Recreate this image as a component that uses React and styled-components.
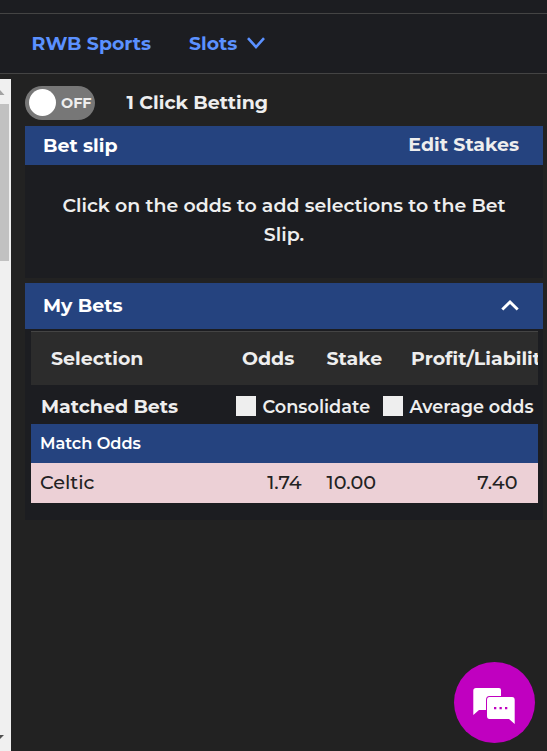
import React from "react";
import styled, { createGlobalStyle } from "styled-components";

const Global = createGlobalStyle`
  *, *::before, *::after { box-sizing: border-box; }
  html, body { margin: 0; background: #222222; overflow: hidden; }
  body { font-family: Montserrat, Inter, sans-serif; font-size: 18.95px; color: #eeeeee; }
`;

const Page = styled.div`
  display: flex;
  flex-direction: column;
  width: 547px;
  height: 751px;
  overflow: hidden;
`;

const TopStrip = styled.div`
  height: 14px;
  flex: none;
  background: #1c1d21;
  border-bottom: 1px solid #444444;
`;

const Nav = styled.nav`
  display: flex;
  align-items: center;
  height: 60px;
  flex: none;
  padding: 0 0 1px 31.5px;
  gap: 36.5px;
  background: #1c1d21;
  border-bottom: 1px solid #444444;
`;

const NavLink = styled.a`
  display: flex;
  align-items: center;
  justify-content: space-between;
  width: ${(p) => p.$width}px;
  color: #5b91ff;
  font-size: 18.9px;
  font-weight: 700;
`;

const Label = styled.span`
  white-space: nowrap;
`;

const Body = styled.div`
  display: flex;
  flex: 1;
  min-height: 0;
`;

const Scrollbar = styled.div`
  display: flex;
  flex-direction: column;
  width: 11px;
  margin-top: 5px;
  background: #f0f0f0;
`;

const ArrowBox = styled.div`
  height: 25px;
  flex: none;
  svg { display: block; }
`;

const Thumb = styled.div`
  width: 9px;
  height: 157px;
  margin-bottom: auto;
  background: #c1c1c1;
`;

const Main = styled.main`
  width: 518px;
  margin-left: 14px;
  padding-top: 12px;
`;

const ToggleRow = styled.div`
  display: flex;
  align-items: center;
  gap: 31.5px;
  height: 34px;
  margin-bottom: 6px;
  font-weight: 700;
  > span { margin-bottom: 2px; }
`;

const Toggle = styled.button`
  display: flex;
  align-items: center;
  width: 70px;
  height: 34px;
  padding: 0 0 0 4px;
  gap: 5px;
  border: 0;
  border-radius: 17px;
  background: #777777;
  color: #eeeeee;
  font: 700 14.4px Montserrat, Inter, sans-serif;
`;

const Knob = styled.span`
  width: 27px;
  height: 27px;
  flex: none;
  margin-bottom: 1px;
  border-radius: 50%;
  background: #ffffff;
`;

const PanelHeader = styled.header`
  display: flex;
  align-items: center;
  justify-content: space-between;
  height: ${(p) => p.$height}px;
  padding: 0 24px ${(p) => p.$lift || 0}px 18px;
  background: #25437f;
  color: #ffffff;
  font-weight: 700;
`;

const EditStakes = styled.a`
  color: #eeeeee;
  margin-bottom: 2px;
`;

const EmptySlip = styled.div`
  height: 113px;
  margin-bottom: 5px;
  padding: 26px 30px 0;
  background: #1c1d21;
  text-align: center;
  line-height: 29px;
  font-weight: 600;
`;

const BetsPanel = styled.section`
  height: 191px;
  padding: 2px 5px 0 6px;
  background: #1c1d21;
`;

const TableHead = styled.div`
  display: grid;
  grid-template-columns: 191px 84.500px 84.500px 1fr;
  align-items: center;
  height: 54px;
  padding-left: 20px;
  border-top: 1px solid #444444;
  background: #2c2c2c;
  overflow: hidden;
  font-weight: 700;
`;

const MatchedRow = styled.div`
  display: flex;
  align-items: center;
  height: 39px;
  padding: 4px 0 0 10px;
  font-weight: 700;
`;

const MatchedTitle = styled.div`
  width: 195px;
`;

const Option = styled.label`
  display: flex;
  align-items: center;
  gap: 6.5px;
  width: ${(p) => p.$width}px;
  flex: none;
  font-size: 17.7px;
  font-weight: 600;
`;

const Box = styled.span`
  width: 20px;
  height: 20px;
  flex: none;
  margin-bottom: 2px;
  background: #eeeeee;
`;

const MarketRow = styled.div`
  display: flex;
  align-items: center;
  height: 39px;
  padding: 0 0 2px 9px;
  background: #25437f;
  color: #ffffff;
  font-size: 16.2px;
  font-weight: 600;
`;

const BetRow = styled.div`
  display: grid;
  grid-template-columns: 187px 74.500px 74.500px 1fr;
  align-items: center;
  height: 40px;
  padding: 0 20.5px 2px 9px;
  background: #ecd0d6;
  color: #222222;
  font-size: 19.2px;
  font-weight: 500;
`;

const Cell = styled.div`
  text-align: ${(p) => (p.$right ? "right" : "left")};
`;

const ChatButton = styled.button`
  position: absolute;
  left: 454px;
  top: 662px;
  width: 81px;
  height: 81px;
  padding: 0;
  border: 0;
  border-radius: 50%;
  background: #c000c0;
  svg { display: block; }
`;

function Chevron({ up, width, height, stroke }) {
  return (
    <svg width={width} height={height} viewBox={`0 0 ${width} ${height}`} fill="none">
      <path
        d={
          up
            ? `M1.3 ${height - 1.5} L${width / 2} 2 L${width - 1.3} ${height - 1.5}`
            : `M1 1.2 L${width / 2} ${height - 2} L${width - 1} 1.2`
        }
        stroke={stroke}
        strokeWidth={up ? 2.9 : 2.6}
      />
    </svg>
  );
}

export default function App() {
  return (
    <Page>
      <Global />
      <TopStrip />
      <Nav>
        <NavLink $width={121}><Label>RWB Sports</Label></NavLink>
        <NavLink $width={76}>
          <Label>Slots</Label>
          <Chevron width={18} height={12} stroke="#5b91ff" />
        </NavLink>
      </Nav>
      <Body>
        <Scrollbar>
          <ArrowBox>
            <svg width="11" height="25"><path d="M-5 16 L0 11 L4.5 16 Z" fill="#a3a3a3" /></svg>
          </ArrowBox>
          <Thumb />
          <ArrowBox>
            <svg width="11" height="25"><path d="M-5 9 H4 L0 13 Z" fill="#505050" /></svg>
          </ArrowBox>
        </Scrollbar>
        <Main>
          <ToggleRow>
            <Toggle><Knob /><Label>OFF</Label></Toggle>
            <Label>1 Click Betting</Label>
          </ToggleRow>
          <PanelHeader $height={39}>
            <Label>Bet slip</Label>
            <EditStakes><Label>Edit Stakes</Label></EditStakes>
          </PanelHeader>
          <EmptySlip>
            <Label>Click on the odds to add selections to the Bet<br />Slip.</Label>
          </EmptySlip>
          <PanelHeader $height={46} $lift={1}>
            <Label>My Bets</Label>
            <Chevron up width={18} height={11} stroke="#ffffff" />
          </PanelHeader>
          <BetsPanel>
            <TableHead>
              <Label>Selection</Label>
              <Label>Odds</Label>
              <Label>Stake</Label>
              <Label>Profit/Liability</Label>
            </TableHead>
            <MatchedRow>
              <MatchedTitle><Label>Matched Bets</Label></MatchedTitle>
              <Option $width={147}><Box /><Label>Consolidate</Label></Option>
              <Option $width={151}><Box /><Label>Average odds</Label></Option>
            </MatchedRow>
            <MarketRow><Label>Match Odds</Label></MarketRow>
            <BetRow>
              <Cell>Celtic</Cell>
              <Cell $right>1.74</Cell>
              <Cell $right>10.00</Cell>
              <Cell $right>7.40</Cell>
            </BetRow>
          </BetsPanel>
        </Main>
      </Body>
      <ChatButton aria-label="Chat">
        <svg width="81" height="81" viewBox="0 0 81 81">
          <path d="M22 26 H45 Q47 26 47 28 V48 H25 L19.3 53 V28.500 Q19.300 26 22 26 Z" fill="#fff" />
          <path d="M35.500 35 H58 Q60.700 35 60.700 38 V62 L55 57 H35.500 Q33 57 33 54 V38 Q33 35 35.500 35 Z" fill="#fff" stroke="#c000c0" strokeWidth="2" paintOrder="stroke" />
          <path d="M40 45h2.300v2.300H40zM45.500 45h2.300v2.300h-2.300zM51 45h2.300v2.300H51z" fill="#c000c0" />
        </svg>
      </ChatButton>
    </Page>
  );
}
